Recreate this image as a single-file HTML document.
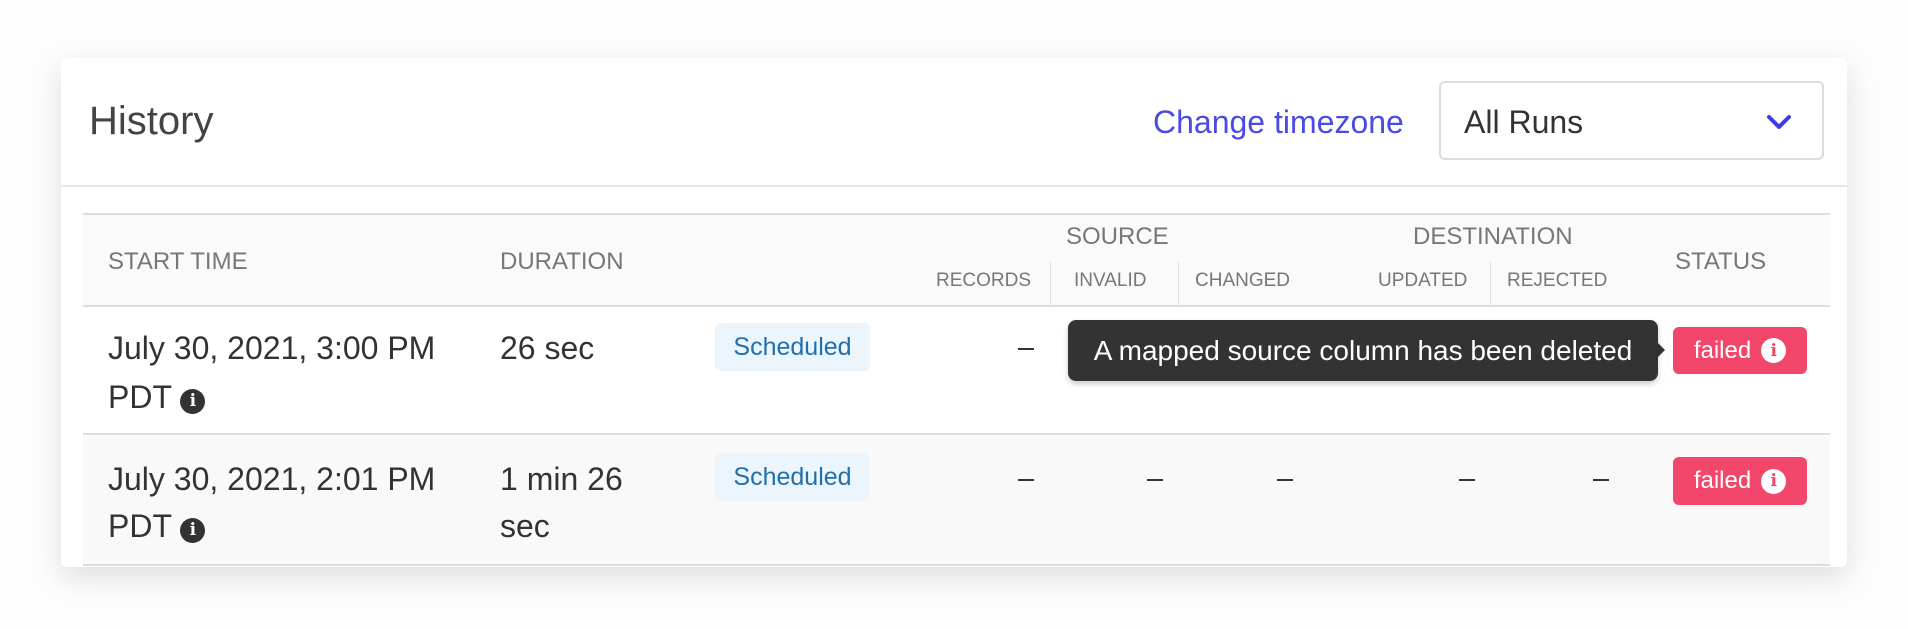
<!DOCTYPE html>
<html><head><meta charset="utf-8"><style>
*{margin:0;padding:0;box-sizing:border-box}
body{width:1908px;height:629px;background:#fdfdfd;font-family:"Liberation Sans",sans-serif;position:relative;overflow:hidden}
.a{position:absolute;white-space:nowrap}
.card{position:absolute;left:61px;top:58px;width:1786px;height:509px;background:#fff;border-radius:6px;box-shadow:0 10px 30px rgba(0,0,0,0.13)}
.th{color:#777;font-size:24px;line-height:1}
.sh{color:#777;font-size:19px;line-height:1}
.td{color:#333;font-size:32px;line-height:1}
.badge{position:absolute;background:#edf5fc;color:#1f6fae;font-size:25px;border-radius:6px;display:flex;align-items:center;justify-content:center}
.fail{position:absolute;background:#f2476a;color:#fff;font-size:24px;border-radius:6px;display:flex;align-items:center;justify-content:center;gap:10px}
.ic{display:inline-flex;width:25px;height:25px;border-radius:50%;align-items:center;justify-content:center;font-weight:bold;font-size:17px;font-family:"DejaVu Serif",serif}
.sep{position:absolute;width:1px;background:#ddd;top:262px;height:44px}
.dash{position:absolute;width:16px;height:2px;background:#333}
</style></head><body>
<div class="card"></div>
<div class="a" style="left:89px;top:101px;font-size:40px;color:#444;line-height:1">History</div>
<div class="a" style="left:1153px;top:106px;font-size:32px;color:#4a4ae6;line-height:1">Change timezone</div>
<div class="a" style="left:1439px;top:81px;width:385px;height:79px;border:2px solid #ddd;border-radius:6px"></div>
<div class="a" style="left:1464px;top:106px;font-size:32px;color:#333;line-height:1">All Runs</div>
<svg class="a" style="left:1766px;top:113px" width="26" height="18" viewBox="0 0 26 18"><path d="M3 4 L13 14 L23 4" fill="none" stroke="#3d3de0" stroke-width="4" stroke-linecap="round" stroke-linejoin="round"/></svg>
<div class="a" style="left:61px;top:185px;width:1786px;height:2px;background:#e6e6e6"></div>
<div class="a" style="left:83px;top:213px;width:1747px;height:94px;background:#fafafa;border-top:2px solid #ddd;border-bottom:2px solid #ddd"></div>
<div class="a" style="left:83px;top:307px;width:1747px;height:128px;background:#fff;border-bottom:2px solid #ddd"></div>
<div class="a" style="left:83px;top:436px;width:1747px;height:130px;background:#f9f9f9;border-bottom:2px solid #ddd"></div>
<div class="a th" style="left:108px;top:250px">START TIME</div>
<div class="a th" style="left:500px;top:250px">DURATION</div>
<div class="a th" style="left:1066px;top:225px">SOURCE</div>
<div class="a th" style="left:1413px;top:225px">DESTINATION</div>
<div class="a th" style="left:1675px;top:250px">STATUS</div>
<div class="a sh" style="left:936px;top:271px">RECORDS</div>
<div class="a sh" style="left:1074px;top:271px">INVALID</div>
<div class="a sh" style="left:1195px;top:271px">CHANGED</div>
<div class="a sh" style="left:1378px;top:271px">UPDATED</div>
<div class="a sh" style="left:1507px;top:271px">REJECTED</div>
<div class="sep" style="left:1050px"></div>
<div class="sep" style="left:1178px"></div>
<div class="sep" style="left:1490px"></div>
<div class="a td" style="left:108px;top:332px">July 30, 2021, 3:00 PM</div>
<div class="a td" style="left:108px;top:381px">PDT <span class="ic" style="background:#333;color:#fff;vertical-align:2px">i</span></div>
<div class="a td" style="left:500px;top:332px">26 sec</div>
<div class="badge" style="left:715px;top:323px;width:155px;height:48px">Scheduled</div>
<div class="dash" style="left:1018px;top:348px"></div>
<div class="a" style="left:1068px;top:320px;width:590px;height:61px;background:#333;border-radius:8px;box-shadow:0 3px 6px rgba(0,0,0,0.2);color:#fff;font-size:28px;display:flex;align-items:center;justify-content:center">A mapped source column has been deleted</div>
<div class="a" style="left:1657px;top:342px;width:0;height:0;border-top:8px solid transparent;border-bottom:8px solid transparent;border-left:8px solid #333"></div>
<div class="fail" style="left:1673px;top:327px;width:134px;height:47px">failed <span class="ic" style="background:#fff;color:#f2476a">i</span></div>
<div class="a td" style="left:108px;top:463px">July 30, 2021, 2:01 PM</div>
<div class="a td" style="left:108px;top:510px">PDT <span class="ic" style="background:#333;color:#fff;vertical-align:2px">i</span></div>
<div class="a td" style="left:500px;top:463px">1 min 26</div>
<div class="a td" style="left:500px;top:510px">sec</div>
<div class="badge" style="left:715px;top:453px;width:155px;height:48px">Scheduled</div>
<div class="dash" style="left:1018px;top:479px"></div>
<div class="dash" style="left:1147px;top:479px"></div>
<div class="dash" style="left:1277px;top:479px"></div>
<div class="dash" style="left:1459px;top:479px"></div>
<div class="dash" style="left:1593px;top:479px"></div>
<div class="fail" style="left:1673px;top:457px;width:134px;height:48px">failed <span class="ic" style="background:#fff;color:#f2476a">i</span></div>
</body></html>
